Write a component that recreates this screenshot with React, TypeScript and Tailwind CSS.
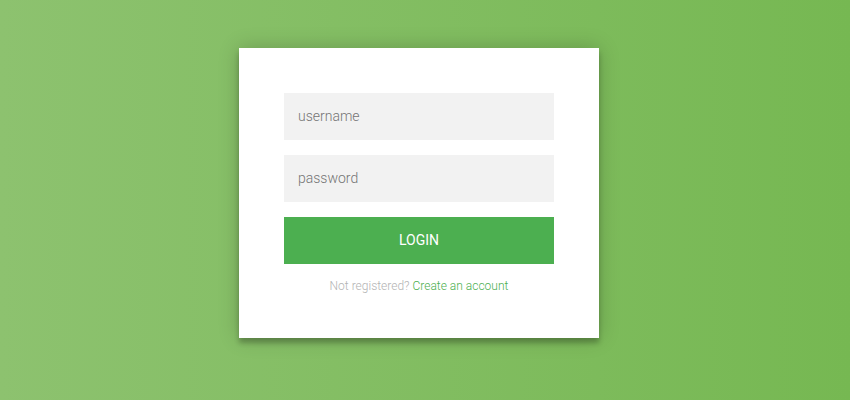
import React from "react";

export default function App() {
  return (
    <div
      className="w-full h-[400px] bg-gradient-to-l from-[#76b852] to-[#8DC26F] pt-[48px] pr-[12px] font-light"
      style={{ fontFamily: "Roboto, sans-serif" }}
    >
      <div className="mx-auto w-[360px] bg-white p-[45px] text-center shadow-[0_0_20px_0_rgba(0,0,0,0.2),0_5px_5px_0_rgba(0,0,0,0.24)]">
        <form className="flex flex-col" onSubmit={(e) => e.preventDefault()}>
          <input
            type="text"
            placeholder="username"
            className="mb-[15px] h-[47px] w-full bg-[#f2f2f2] pl-[14px] pr-[15px] pb-[2px] text-[14px] font-light outline-none placeholder:text-[#757575] [font-family:Roboto,sans-serif]"
          />
          <input
            type="password"
            placeholder="password"
            className="mb-[15px] h-[47px] w-full bg-[#f2f2f2] pl-[14px] pr-[15px] pb-[2px] text-[14px] font-light outline-none placeholder:text-[#757575] [font-family:Roboto,sans-serif]"
          />
          <button
            type="submit"
            className="h-[47px] w-full bg-[#4CAF50] text-[14px] font-normal uppercase text-white [font-family:Roboto,sans-serif]"
          >
            login
          </button>
          <p className="mt-[15px] text-[12px] leading-[14px] text-[#b3b3b3]">
            Not registered?{" "}
            <a href="#" className="text-[#4CAF50] no-underline">
              Create an account
            </a>
          </p>
        </form>
      </div>
    </div>
  );
}
